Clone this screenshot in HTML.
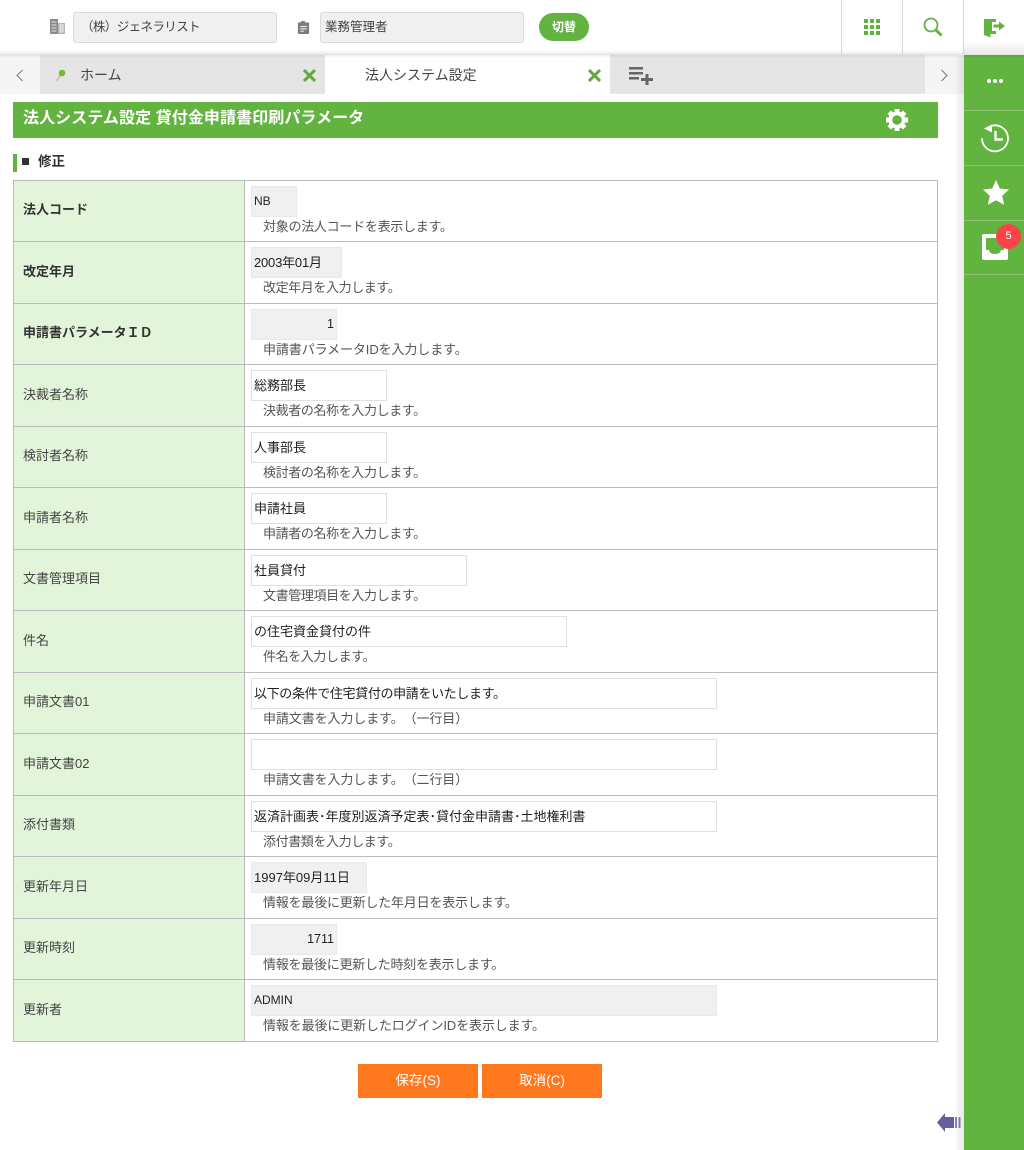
<!DOCTYPE html>
<html lang="ja"><head><meta charset="utf-8"><title>法人システム設定</title>
<style>
*{box-sizing:border-box;text-spacing-trim:space-all}
html,body{margin:0;padding:0;width:1024px;height:1150px;overflow:hidden;background:#fff;font-family:"Liberation Sans","Noto Sans CJK JP",sans-serif;font-size:13px;color:#333}
.a{position:absolute;white-space:nowrap}
.lab{position:absolute;left:14px;width:230px;background:#e2f4da;padding-left:9px;font-size:13px;color:#444}
.lab.b{font-weight:bold;color:#333}
.line{position:absolute;left:13px;width:925px;height:1px;background:#bbb}
.in{position:absolute;left:251px;height:31px;border:1px solid #e0e0e0;background:#fff;font-size:13px;line-height:29px;padding-left:2px;color:#222;white-space:nowrap}
.in.g{background:#f0f0f0;border-color:#e8e8e8}
.in.r{text-align:right;padding-right:2px;font-size:12.5px}
.hint{position:absolute;left:263px;font-size:13px;color:#555;line-height:16px;white-space:nowrap}
.top{position:absolute;top:12px;height:31px;background:#f0f0f0;border:1px solid #dcdcdc;border-radius:3px;font-size:12.5px;line-height:29px;color:#444;white-space:nowrap}
.sep{position:absolute;top:0;width:1px;height:54px;background:#d8d8d8}
.sl{position:absolute;left:964px;width:60px;height:1px;background:#8cc46e}
</style></head><body>

<!-- header -->
<svg class="a" style="left:50px;top:19px" width="15" height="15" viewBox="0 0 15 15"><rect x="0" y="0" width="8" height="15" fill="#8a8a8a"/><rect x="8" y="4" width="7" height="11" fill="#b5b5b5"/><path d="M1.500 3h5M1.500 6h5M1.500 9h5M1.500 12h5" stroke="#e4e4e4" stroke-width="1"/><path d="M9 6h5M9 8h5M9 10h5M9 12h5M10.500 5v9M12.500 5v9" stroke="#eee" stroke-width=".7"/></svg>
<div class="top" style="left:73px;width:204px;padding-left:7px;letter-spacing:-.6px">（株）ジェネラリスト</div>
<svg class="a" style="left:297px;top:20px" width="13" height="14" viewBox="0 0 14 15"><path d="M1 2.500h3.500V1h4v1.500H12a1 1 0 0 1 1 1V14a1 1 0 0 1-1 1H2a1 1 0 0 1-1-1V3.500a1 1 0 0 1 1-1z" fill="#7d7d7d"/><path d="M3.500 7h7M3.500 9.500h7M3.500 12h4" stroke="#fff" stroke-width="1"/></svg>
<div class="top" style="left:320px;width:204px;padding-left:4px">業務管理者</div>
<div class="a" style="left:539px;top:13px;width:50px;height:28px;border-radius:14px;background:#62b33f;color:#fff;font-size:12px;font-weight:bold;text-align:center;line-height:28px">切替</div>
<div class="a" style="left:964px;top:42px;width:60px;height:13px;background:linear-gradient(rgba(0,0,0,0),rgba(0,0,0,.1))"></div>
<div class="sep" style="left:841px"></div><div class="sep" style="left:902px"></div><div class="sep" style="left:963px"></div>
<svg class="a" style="left:864px;top:19px" width="16" height="16" viewBox="0 0 16 16" fill="#62b33f"><rect x="0" y="0" width="4" height="4"/><rect x="6" y="0" width="4" height="4"/><rect x="12" y="0" width="4" height="4"/><rect x="0" y="6" width="4" height="4"/><rect x="6" y="6" width="4" height="4"/><rect x="12" y="6" width="4" height="4"/><rect x="0" y="12" width="4" height="4"/><rect x="6" y="12" width="4" height="4"/><rect x="12" y="12" width="4" height="4"/></svg>
<svg class="a" style="left:923px;top:17px" width="20" height="20" viewBox="0 0 20 20" fill="none" stroke="#62b33f"><circle cx="8" cy="8" r="6.500" stroke-width="1.800"/><path d="M13 13L18.500 18.500" stroke-width="3"/></svg>
<svg class="a" style="left:983px;top:17px" width="22" height="21" viewBox="0 0 22 21" fill="#62b33f"><path d="M1 2h12v3H9v9h4v3H7.500v3.500L1 18z"/><path d="M10.500 7.500H16V4.500L22 9l-6 4.500v-3h-5.500z"/></svg>

<!-- tab bar -->
<div class="a" style="left:0;top:54px;width:964px;height:40px;background:#f5f5f5"></div>
<div class="a" style="left:40px;top:55px;width:885px;height:39px;background:#e5e5e5"></div>
<div class="a" style="left:325px;top:55px;width:285px;height:39px;background:#fff"></div>
<div class="a" style="left:0;top:50px;width:964px;height:5px;background:linear-gradient(rgba(0,0,0,0),rgba(0,0,0,.09))"></div>
<div class="a" style="left:0;top:55px;width:964px;height:3px;background:linear-gradient(rgba(0,0,0,.06),rgba(0,0,0,0))"></div>
<svg class="a" style="left:15px;top:69px" width="9" height="13" viewBox="0 0 9 13" fill="none" stroke="#777" stroke-width="1"><path d="M7.500 1L2 6.500l5.500 5.500"/></svg>
<svg class="a" style="left:940px;top:69px" width="9" height="13" viewBox="0 0 9 13" fill="none" stroke="#777" stroke-width="1"><path d="M1.500 1L7 6.500 1.500 12"/></svg>
<svg class="a" style="left:54px;top:66px" width="16" height="16" viewBox="0 0 16 16"><path d="M7 8L2.500 15" stroke="#c4c4c4" stroke-width="1.800"/><circle cx="8" cy="7" r="3.300" fill="#6fbf2c"/></svg>
<div class="a" style="left:80px;top:65px;font-size:14px;line-height:20px;color:#444">ホーム</div>
<svg class="a" style="left:303px;top:69px" width="13" height="13" viewBox="0 0 13 13" stroke="#62a83f" stroke-width="3"><path d="M1 1l11 11M12 1L1 12"/></svg>
<div class="a" style="left:365px;top:65px;font-size:14px;line-height:20px;color:#444">法人システム設定</div>
<svg class="a" style="left:588px;top:69px" width="13" height="13" viewBox="0 0 13 13" stroke="#62a83f" stroke-width="3"><path d="M1 1l11 11M12 1L1 12"/></svg>
<svg class="a" style="left:629px;top:66px" width="24" height="19" viewBox="0 0 24 19" fill="#666"><rect x="0" y="1" width="14" height="2.500"/><rect x="0" y="6" width="14" height="2.500"/><rect x="0" y="11" width="10" height="2.500"/><rect x="12" y="12" width="12" height="3"/><rect x="16.500" y="8" width="3" height="11"/></svg>

<!-- title -->
<div class="a" style="left:13px;top:102px;width:925px;height:36px;background:#62b33f"></div>
<div class="a" style="left:23px;top:108px;font-size:16px;font-weight:bold;color:#fff;line-height:22px;letter-spacing:.08px">法人システム設定 貸付金申請書印刷パラメータ</div>
<svg class="a" style="left:885px;top:108px" width="24" height="24" viewBox="0 0 24 24"><g fill="#fff"><circle cx="12" cy="12" r="8.500"/><rect x="9.500" y="1" width="5" height="22"/><rect x="9.500" y="1" width="5" height="22" transform="rotate(45 12 12)"/><rect x="9.500" y="1" width="5" height="22" transform="rotate(90 12 12)"/><rect x="9.500" y="1" width="5" height="22" transform="rotate(135 12 12)"/></g><circle cx="12" cy="12" r="4.800" fill="#62b33f"/></svg>

<!-- section -->
<div class="a" style="left:13px;top:154px;width:4px;height:18px;background:#62b33f"></div>
<div class="a" style="left:22px;top:158px;width:7px;height:7px;background:#333"></div>
<div class="a" style="left:38px;top:153px;font-size:13.500px;font-weight:bold;line-height:18px;color:#333">修正</div>

<!-- table backgrounds -->
<div class="lab b" style="top:181px;height:60px;line-height:58px">法人コード</div>
<div class="lab b" style="top:242px;height:61px;line-height:60px">改定年月</div>
<div class="lab b" style="top:304px;height:60px;line-height:58px">申請書パラメータＩＤ</div>
<div class="lab" style="top:365px;height:61px;line-height:60px">決裁者名称</div>
<div class="lab" style="top:427px;height:60px;line-height:58px">検討者名称</div>
<div class="lab" style="top:488px;height:61px;line-height:60px">申請者名称</div>
<div class="lab" style="top:550px;height:60px;line-height:58px">文書管理項目</div>
<div class="lab" style="top:611px;height:61px;line-height:60px">件名</div>
<div class="lab" style="top:673px;height:60px;line-height:58px">申請文書01</div>
<div class="lab" style="top:734px;height:61px;line-height:60px">申請文書02</div>
<div class="lab" style="top:796px;height:60px;line-height:58px">添付書類</div>
<div class="lab" style="top:857px;height:61px;line-height:60px">更新年月日</div>
<div class="lab" style="top:919px;height:60px;line-height:58px">更新時刻</div>
<div class="lab" style="top:980px;height:61px;line-height:60px">更新者</div>

<div class="line" style="top:180px"></div><div class="line" style="top:241px"></div><div class="line" style="top:303px"></div><div class="line" style="top:364px"></div><div class="line" style="top:426px"></div><div class="line" style="top:487px"></div><div class="line" style="top:549px"></div><div class="line" style="top:610px"></div><div class="line" style="top:672px"></div><div class="line" style="top:733px"></div><div class="line" style="top:795px"></div><div class="line" style="top:856px"></div><div class="line" style="top:918px"></div><div class="line" style="top:979px"></div><div class="line" style="top:1041px"></div>
<div class="a" style="left:13px;top:180px;width:1px;height:862px;background:#bbb"></div>
<div class="a" style="left:244px;top:180px;width:1px;height:862px;background:#bbb"></div>
<div class="a" style="left:937px;top:180px;width:1px;height:862px;background:#bbb"></div>

<!-- fields -->
<div class="in g" style="top:186px;width:46px;font-size:12px">NB</div><div class="hint" style="top:219px;letter-spacing:-.27px">対象の法人コードを表示します。</div>
<div class="in g" style="top:247px;width:91px;letter-spacing:-.2px">2003年01月</div><div class="hint" style="top:280px;letter-spacing:-.4px">改定年月を入力します。</div>
<div class="in g r" style="top:309px;width:86px">1</div><div class="hint" style="top:342px;letter-spacing:-.1px">申請書パラメータIDを入力します。</div>
<div class="in" style="top:370px;width:136px">総務部長</div><div class="hint" style="top:403px;letter-spacing:-.38px">決裁者の名称を入力します。</div>
<div class="in" style="top:432px;width:136px">人事部長</div><div class="hint" style="top:465px;letter-spacing:-.38px">検討者の名称を入力します。</div>
<div class="in" style="top:493px;width:136px">申請社員</div><div class="hint" style="top:526px;letter-spacing:-.38px">申請者の名称を入力します。</div>
<div class="in" style="top:555px;width:216px">社員貸付</div><div class="hint" style="top:588px;letter-spacing:-.38px">文書管理項目を入力します。</div>
<div class="in" style="top:616px;width:316px">の住宅資金貸付の件</div><div class="hint" style="top:649px;letter-spacing:-.4px">件名を入力します。</div>
<div class="in" style="top:678px;width:466px;letter-spacing:-.35px">以下の条件で住宅貸付の申請をいたします。</div><div class="hint" style="top:711px;letter-spacing:-.1px">申請文書を入力します。（一行目）</div>
<div class="in" style="top:739px;width:466px"></div><div class="hint" style="top:772px;letter-spacing:-.1px">申請文書を入力します。（二行目）</div>
<div class="in" style="top:801px;width:466px">返済計画表･年度別返済予定表･貸付金申請書･土地権利書</div><div class="hint" style="top:834px;letter-spacing:-.4px">添付書類を入力します。</div>
<div class="in g" style="top:862px;width:116px">1997年09月11日</div><div class="hint" style="top:895px;letter-spacing:-.2px">情報を最後に更新した年月日を表示します。</div>
<div class="in g r" style="top:924px;width:86px">1711</div><div class="hint" style="top:957px;letter-spacing:-.25px">情報を最後に更新した時刻を表示します。</div>
<div class="in g" style="top:985px;width:466px;font-size:12px">ADMIN</div><div class="hint" style="top:1018px;letter-spacing:-.12px">情報を最後に更新したログインIDを表示します。</div>

<!-- buttons -->
<div class="a" style="left:358px;top:1064px;width:120px;height:34px;background:#ff781e;color:#fff;font-size:13.500px;text-align:center;line-height:33px">保存(S)</div>
<div class="a" style="left:482px;top:1064px;width:120px;height:34px;background:#ff781e;color:#fff;font-size:13.500px;text-align:center;line-height:33px">取消(C)</div>

<!-- back arrow -->
<svg class="a" style="left:937px;top:1112px" width="26" height="21" viewBox="0 0 26 21"><path d="M0 10.500L8 1v4h9v11H8v4z" fill="#64609f"/><path d="M19 5v11M22.500 5v11" stroke="#8583b3" stroke-width="2"/></svg>

<!-- right sidebar -->
<div class="a" style="left:954px;top:56px;width:10px;height:1094px;background:linear-gradient(90deg,rgba(0,0,0,0),rgba(0,0,0,.09))"></div>
<div class="a" style="left:964px;top:55px;width:60px;height:1095px;background:#62b33f"></div>
<div class="sl" style="top:110px"></div><div class="sl" style="top:165px"></div><div class="sl" style="top:220px"></div><div class="sl" style="top:274px"></div>
<svg class="a" style="left:986px;top:77px" width="18" height="8" viewBox="0 0 18 8" fill="#fff"><circle cx="3" cy="4" r="2"/><circle cx="9" cy="4" r="2"/><circle cx="15" cy="4" r="2"/></svg>
<svg class="a" style="left:980px;top:123px" width="30" height="30" viewBox="0 0 30 30" fill="none" stroke="#fff"><path d="M12 2.700A13 13 0 1 1 2 15.300" stroke-width="1.800"/><path d="M4 5.500L12 1.500v8z" fill="#fff" stroke="none"/><path d="M15.500 8v8.500H23" stroke-width="2.400"/></svg>
<svg class="a" style="left:983px;top:180px" width="26" height="25" viewBox="0 0 26 25"><path d="M13 0l3.800 8.500 9.200 1-6.800 6.200 1.900 9.100L13 20.200 4.900 24.800l1.900-9.100L0 9.500l9.200-1z" fill="#fff"/></svg>
<svg class="a" style="left:982px;top:234px" width="26" height="26" viewBox="0 0 26 26"><path d="M2 0h22a2 2 0 0 1 2 2v22a2 2 0 0 1-2 2H2a2 2 0 0 1-2-2V2a2 2 0 0 1 2-2z" fill="#fff"/><path d="M4 4h18v12h-3c-.5 2.500-2 4-6 4s-5.500-1.500-6-4H4z" fill="#62b33f"/></svg>
<div class="a" style="left:996px;top:224px;width:25px;height:25px;border-radius:50%;background:#fc4349;color:#fff;font-size:11px;text-align:center;line-height:25px">5</div>
<div class="a" style="left:964px;top:55px;width:60px;height:3px;background:linear-gradient(rgba(0,0,0,.08),rgba(0,0,0,0))"></div>
</body></html>
